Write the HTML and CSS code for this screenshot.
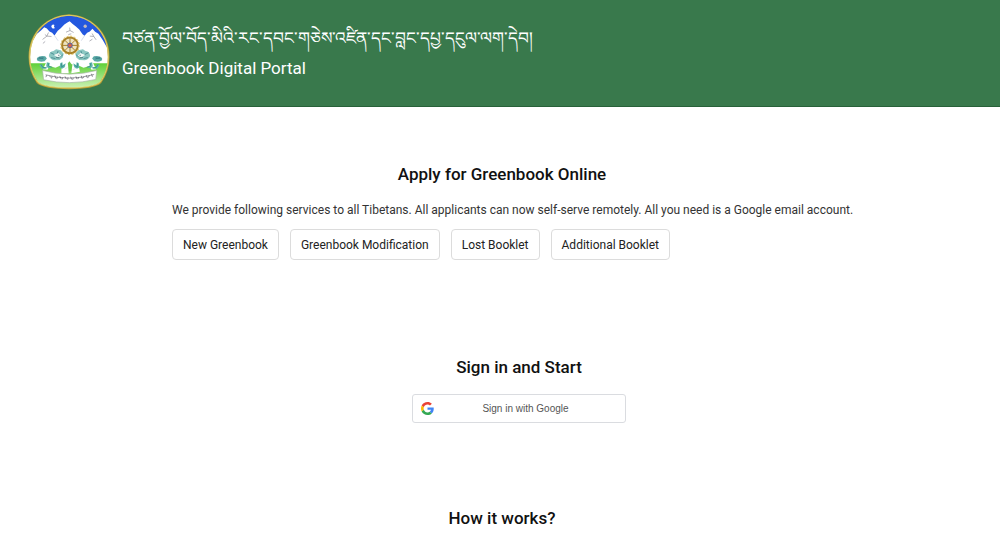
FILE: index.html
```html
<!DOCTYPE html>
<html lang="en">
<head>
    <meta charset="UTF-8">
    <meta name="viewport" content="width=device-width, initial-scale=1.0">
    <title>Greenbook Digital Portal</title>
    <link rel="stylesheet" href="styles.css">
</head>
<body>

    <header class="header">
        <svg class="emblem" viewBox="21 27 248 230" role="img" aria-label="Emblem">
            <defs>
                <clipPath id="shield">
                    <path d="M145 30C83 32 25 79 25 157C25 186 35 214 50 235C77 258 213 258 240 235C255 214 265 186 265 157C265 79 207 32 145 30Z"/>
                </clipPath>
                <linearGradient id="grass" x1="0" y1="0" x2="0" y2="1">
                    <stop offset="0" stop-color="#5fd038"/>
                    <stop offset="1" stop-color="#d9f5c4"/>
                </linearGradient>
                <g id="lion">
                    <path d="M66 194L76 174L86 164L112 162L124 172L130 190L116 184L104 190L86 184L80 196Z" fill="#fff"/>
                    <path d="M48 160q9-9 25-5l5 7-7 8q-15 4-23-3z" fill="#5aa9a5"/>
                    <path d="M84 154q1-14 14-15l8-5 14 3 9 10-3 12-9 7-17 1q-12-3-16-13z" fill="#8cc8c2"/>
                    <path d="M52 163l16-4M54 158l14 5M89 144l12 6M91 159l13 3M112 139l-4 11M119 156l8-6" fill="none" stroke="#2f7480" stroke-width="2"/>
                    <path d="M99 151l14-6 9 8-11 5z" fill="#f3f8f6"/>
                    <path d="M112 152h4M106 159l10 1" stroke="#1f4d55" stroke-width="2"/>
                    <path d="M55 182l8-4 4 9 11 2-4 4H63zM78 173l9 2-2 10 9 4-12 2-6-6zM119 175l6-2 1 9 9-6-3 12-8 5-8-4z" fill="#5db5ac"/>
                    <path d="M60 179l6 10 12 1M82 176l2 9 10 3M122 176l1 12 8-6" fill="none" stroke="#2f857d" stroke-width="2"/>
                </g>
            </defs>
            <g clip-path="url(#shield)">
                <path fill="#2458df" d="M20 25h250v235H20z"/>
                <path fill="#fff" d="M20 134L32 108L46 88L53 83L61 76L70 67L78 71L86 80L94 84L101 92L111 78L120 70L131 59L140 53L147 49L156 57L165 64L176 74L186 88L192 93L200 84L208 80L216 72L224 81L234 87L247 106L257 123L270 138V185H20Z"/>
                <path d="M101 92l11 16M192 93l-10 15" stroke="#c3cde2" stroke-width="2"/>
                <path d="M65 104l13-10 5-11M78 94l14 1M78 94l-6-5M66 116l7-6M136 82l12-5-1-9M148 77l11 6M143 89l9-2M208 94l12 1-5-9M220 95l7 10M216 103l-9 6" fill="none" stroke="#8c8c98" stroke-width="2"/>
                <path fill="url(#grass)" d="M20 176H270V260H20Z"/>
                <path fill="#fff" d="M108 180l12-14 8-18h38l8 18 12 14z"/>
                <path fill="#6cc94a" d="M138 182l8-12 9 12 4 18h-25z"/>
                <path fill="#fff" d="M122 196l2-16 10-14 8 14 2 26h-22zM152 206l3-24 7-15 12 15 4 20z"/>
                <path d="M126 180l8 6M132 194l8-5M158 182l8 5M156 196l9-4" stroke="#a9b7a8" stroke-width="1"/>
                <path d="M101 60a6 6 0 1 0 1 9 7 7 0 0 1-1-9z" fill="#fff"/>
                <circle cx="194" cy="64" r="5" fill="#c2b9bc"/>
            </g>
            <use href="#lion"/>
            <use href="#lion" transform="matrix(-1 0 0 1 293 0)"/>
            <g fill="none" stroke="#a98228">
                <circle cx="148" cy="122" r="24" fill="#eee3bf" stroke-width="6"/>
                <circle cx="148" cy="122" r="28" stroke="#dcb84c" stroke-width="3" stroke-dasharray="6 5"/>
                <path d="M148 100v44M126 122h44M132 106l32 32M164 106l-32 32" stroke-width="3"/>
                <circle cx="148" cy="122" r="7" fill="#d76145" stroke="#5065a4" stroke-width="3"/>
            </g>
            <path d="M65 198Q146 220 229 198L226 225Q146 244 68 226Z" fill="#fff" stroke="#a6b2a2" stroke-width="2"/>
            <path d="M74 211q36 10 73 10t74-11" fill="none" stroke="#6d6e76" stroke-width="2"/>
            <path d="M78 212l-3 6M86 214l4 5M94 215l-2 7M102 213l3 9M110 217l-2 7M117 215l4 8M126 219l-2 6M133 216l4 8M142 219l-1 7M150 217l3 8M158 220l-2 6M166 216l3 8M174 218l-2 6M182 214l3 9M190 216l-3 5M197 212l4 9M206 213l-2 6M213 208l3 9" stroke="#53545d" stroke-width="2"/>
            <path d="M145 30C83 32 25 79 25 157C25 186 35 214 50 235C77 258 213 258 240 235C255 214 265 186 265 157C265 79 207 32 145 30Z" fill="none" stroke="#b99d35" stroke-width="5"/>
            <path d="M145 31C83 33 26 79 26 157C26 186 36 213 51 234C78 256 212 256 239 234C254 213 264 186 264 157C264 79 207 33 145 31Z" fill="none" stroke="#ece883" stroke-width="2"/>
        </svg>
        <div class="brand">
            <div class="brand-tibetan" lang="bo">བཙན་བྱོལ་བོད་མིའི་རང་དབང་གཅེས་འཛིན་དང་བླང་དཔྱ་དངུལ་ལག་དེབ།</div>
            <div class="brand-name">Greenbook Digital Portal</div>
        </div>
    </header>

    <main class="content">
        <section class="services">
            <h2>Apply for Greenbook Online</h2>
            <p>We provide following services to all Tibetans. All applicants can now self-serve remotely. All you need is a Google email account.</p>
            <div class="service-list">
                <button type="button">New Greenbook</button>
                <button type="button">Greenbook Modification</button>
                <button type="button">Lost Booklet</button>
                <button type="button">Additional Booklet</button>
            </div>
        </section>

        <section class="signin">
            <h2>Sign in and Start</h2>
            <button type="button" class="google">
                <svg class="google-icon" viewBox="0 0 48 48" aria-hidden="true">
                    <path fill="#EA4335" d="M24 9.5c3.54 0 6.71 1.22 9.21 3.6l6.85-6.85C35.9 2.38 30.47 0 24 0 14.62 0 6.51 5.38 2.56 13.22l7.98 6.19C12.43 13.72 17.74 9.5 24 9.5z"/>
                    <path fill="#4285F4" d="M46.98 24.55c0-1.57-.15-3.09-.38-4.55H24v9.02h12.94c-.58 2.96-2.26 5.48-4.78 7.18l7.73 6c4.51-4.18 7.09-10.36 7.09-17.65z"/>
                    <path fill="#FBBC05" d="M10.53 28.59c-.48-1.45-.76-2.99-.76-4.59s.27-3.14.76-4.59l-7.98-6.19C.92 16.46 0 20.12 0 24s.92 7.54 2.56 10.78l7.97-6.19z"/>
                    <path fill="#34A853" d="M24 48c6.48 0 11.93-2.13 15.89-5.81l-7.73-6c-2.15 1.45-4.92 2.3-8.16 2.3-6.26 0-11.57-4.22-13.47-9.91l-7.98 6.19C6.51 42.62 14.62 48 24 48z"/>
                </svg>
                <span>Sign in with Google</span>
            </button>
        </section>

        <section class="how">
            <h2>How it works?</h2>
        </section>
    </main>

</body>
</html>
```

FILE: styles.css
```css
* {
    margin: 0;
    padding: 0;
    box-sizing: border-box;
}

body {
    font-family: Roboto, "Liberation Sans", sans-serif;
    background-color: #fff;
    color: #111;
}

.header {
    display: flex;
    align-items: flex-start;
    gap: 12px;
    min-height: 107px;
    padding: 14px 28px;
    background-color: #39794c;
    border-bottom: 1px solid #286139;
    color: #fff;
}

.emblem {
    width: 82px;
    height: 76px;
    flex-shrink: 0;
}

.brand {
    padding-top: 8px;
}

.brand-tibetan {
    font-size: 17px;
    line-height: 32px;
}

.brand-name {
    font-size: 17px;
    line-height: 28px;
}

.content {
    display: flex;
    flex-direction: column;
    align-items: center;
    padding: 55px 14px 0 18px;
}

h2 {
    font-size: 17px;
    font-weight: 500;
    line-height: 24px;
    text-align: center;
}

.services {
    width: 100%;
    max-width: 660px;
}

.services p {
    margin-top: 14px;
    font-size: 12px;
    line-height: 20px;
    color: #333;
    white-space: nowrap;
}

.service-list {
    display: flex;
    flex-wrap: wrap;
    gap: 11px;
    margin-top: 9px;
}

.service-list button {
    height: 31px;
    padding: 0 10px;
    border: 1px solid #dcdcdc;
    border-radius: 4px;
    background: #fff;
    color: #222;
    font-family: inherit;
    font-size: 12px;
    cursor: pointer;
}

.signin {
    display: flex;
    flex-direction: column;
    align-items: center;
    gap: 15px;
    margin-top: 95px;
    padding-left: 34px;
}

.google {
    display: flex;
    align-items: center;
    width: 214px;
    height: 29px;
    padding: 0 8px;
    border: 1px solid #dadce0;
    border-radius: 3px;
    background: #fff;
    color: #555;
    font-family: "Liberation Sans", Arial, sans-serif;
    font-size: 10px;
    cursor: pointer;
}

.google-icon {
    width: 13px;
    height: 13px;
}

.google span {
    flex: 1;
}

.how {
    margin-top: 83px;
}

@media (max-width: 880px) {
    .services p {
        white-space: normal;
    }
}
```
